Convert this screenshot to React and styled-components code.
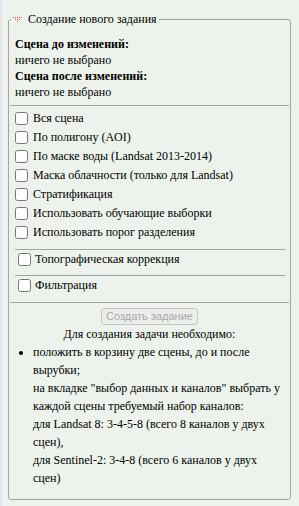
import React from "react";
import styled, { createGlobalStyle } from "styled-components";

const Global = createGlobalStyle`
  html, body { margin: 0; padding: 0; }
  body {
    background: #edf3ec;
    font-family: "Liberation Serif", "Times New Roman", serif;
    font-size: 12px;
    color: #000;
  }
`;

const Page = styled.div`
  box-sizing: border-box;
  min-height: 506px;
  width: 299px;
  padding: 12px 0 8px 0;
  border-left: 2px solid #e2e4ea;
  background: #edf3ec;
  font-family: "Liberation Serif", "Times New Roman", serif;
  font-size: 12px;
`;

const Fieldset = styled.fieldset`
  margin: 0 8px 0 6px;
  padding: 0 2px 12px 2px;
  border: 1px solid #a3a5a3;
  border-radius: 3px;
  min-width: 0;
`;

const Legend = styled.legend`
  padding: 0 2px;
  display: flex;
  align-items: center;
  gap: 6px;
  line-height: 15px;
`;

const Info = styled.div`
  padding: 9px 0 0 4px;
  line-height: 16px;
`;

const Strong = styled.div`
  font-weight: bold;
`;

const Rule = styled.div`
  border-top: 1px solid #a3a5a3;
  margin: ${(p) => p.$m};
`;

const Options = styled.div`
  padding: 3px 0 7px 0;
`;

const Row = styled.label`
  display: flex;
  align-items: center;
  height: 19px;
  line-height: 19px;
  padding-left: ${(p) => p.$indent || 0}px;
  white-space: nowrap;
`;

const Box = styled.input.attrs({ type: "checkbox" })`
  width: 13px;
  height: 13px;
  margin: 3px ${(p) => p.$gap || 5}px 3px 4px;
  flex: none;
`;

const Section = styled.div`
  padding: 0 0 6px 0;
`;

const Actions = styled.div`
  display: flex;
  justify-content: center;
  padding-top: 5px;
`;

const Button = styled.button`
  font-family: "Liberation Sans", Arial, sans-serif;
  font-size: 11px;
  height: 17px;
  line-height: 15px;
  padding: 0 4px;
  color: #a7aaa7;
  background: #eceeec;
  border: 1px solid #c6c9c6;
  border-radius: 3px;
`;

const Note = styled.div`
  text-align: center;
  line-height: 18px;
`;

const List = styled.ul`
  margin: 0;
  padding: 0 2px 0 22px;
  line-height: 18px;
`;

function DotsIcon() {
  const dots = [];
  for (let r = 0; r < 3; r++) {
    for (let c = r * 2; c <= 8 - r * 2; c += 2) {
      dots.push(<rect key={`${r}-${c}`} x={c} y={r * 2} width="1" height="1" />);
    }
  }
  return (
    <svg width="9" height="5" viewBox="0 0 9 5" fill="#e0504a" shapeRendering="crispEdges">
      {dots}
    </svg>
  );
}

const mainOptions = [
  "Вся сцена",
  "По полигону (AOI)",
  "По маске воды (Landsat 2013-2014)",
  "Маска облачности (только для Landsat)",
  "Стратификация",
  "Использовать обучающие выборки",
  "Использовать порог разделения",
];

export default function App() {
  return (
    <>
      <Global />
      <Page>
        <Fieldset>
          <Legend>
            <DotsIcon />
            <span>Создание нового задания</span>
          </Legend>
          <Info>
            <Strong>Сцена до изменений:</Strong>
            <div>ничего не выбрано</div>
            <Strong>Сцена после изменений:</Strong>
            <div>ничего не выбрано</div>
          </Info>
          <Rule $m="5px -1px 0 -1px" />
          <Options>
            {mainOptions.map((t) => (
              <Row key={t}>
                <Box />
                {t}
              </Row>
            ))}
          </Options>
          <Rule $m="0 3px 0 4px" />
          <Section>
            <Row $indent={3}>
              <Box $gap={4} />
              Топографическая коррекция
            </Row>
          </Section>
          <Rule $m="0 3px 0 4px" />
          <Section>
            <Row $indent={3}>
              <Box $gap={4} />
              Фильтрация
            </Row>
          </Section>
          <Rule $m="1px -1px 0 -1px" />
          <Actions>
            <Button disabled>Создать задание</Button>
          </Actions>
          <Note>Для создания задачи необходимо:</Note>
          <List>
            <li>
              положить в корзину две сцены, до и после вырубки;
              <br />
              на вкладке "выбор данных и каналов" выбрать у каждой сцены требуемый набор каналов:
              <br />
              для Landsat 8: 3-4-5-8 (всего 8 каналов у двух сцен),
              <br />
              для Sentinel-2: 3-4-8 (всего 6 каналов у двух сцен)
            </li>
          </List>
        </Fieldset>
      </Page>
    </>
  );
}
